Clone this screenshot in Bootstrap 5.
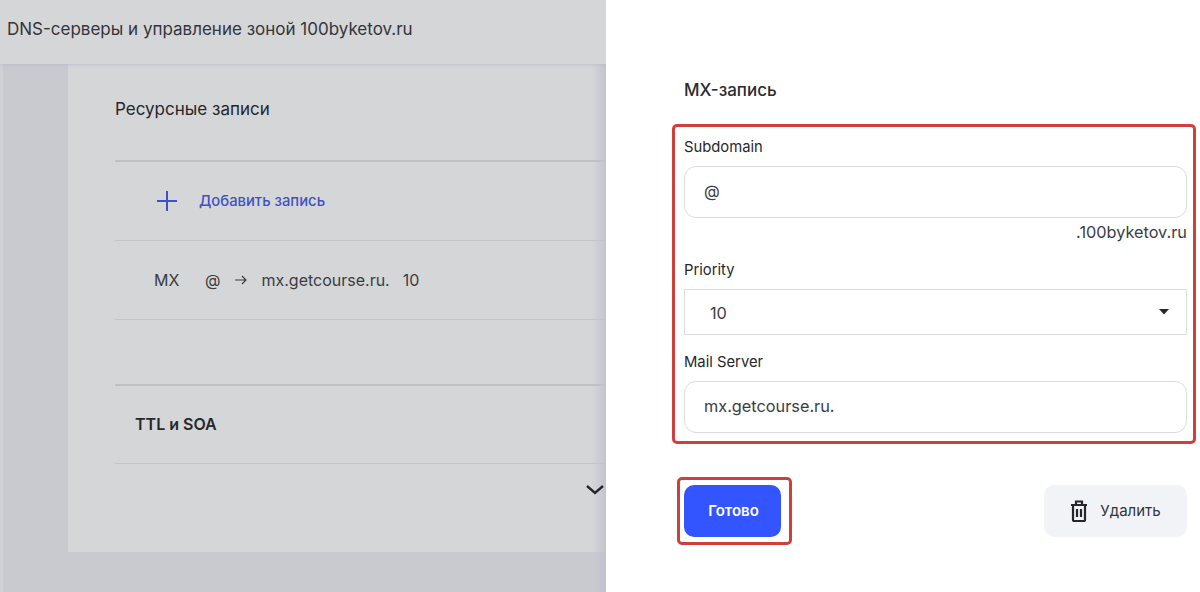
<!doctype html>
<html lang="ru">
<head>
<meta charset="utf-8">
<title>MX-запись</title>
<link href="https://cdn.jsdelivr.net/npm/bootstrap@5.3.0/dist/css/bootstrap.min.css" rel="stylesheet">
<style>
html,body{height:592px;overflow:hidden}
body{font-family:Inter,"Liberation Sans",sans-serif;color:#24262b;background:#fff}
.shell{height:592px}
.backdrop{width:606px;flex:none;background:#c9cad0;overflow:hidden;position:relative}
.backdrop::after{content:"";position:absolute;top:0;right:0;bottom:0;width:14px;background:linear-gradient(to right,rgba(190,193,208,0),rgba(190,193,208,.85));pointer-events:none}
.backdrop::before{content:"";position:absolute;top:0;left:0;bottom:0;width:3px;background:#d0d1d5}
.topline{height:64px;background:#d5d6d8;font-size:17px;padding:0 0 4px 7px;box-shadow:0 1px 3px rgba(165,170,195,.45);position:relative;z-index:1;color:#33353a;white-space:nowrap}
.sheet{margin-left:68px;width:600px;height:488px;background:#d5d6d8;padding-left:47px}
.sec-title{height:98px;font-size:17px;padding-top:34px;line-height:22px;color:#24262b;border-bottom:2px solid #bfc0c4}
.sec-add{height:79px;border-bottom:1px solid #c4c5c9;padding-left:42px;gap:22px;color:#3f51c4;font-size:14.8px;font-weight:500}
.sec-rec{height:79px;border-bottom:1px solid #c4c5c9;padding-left:39px;font-size:16px;color:#3a3c41}
.sec-gap{height:66px;border-bottom:2px solid #bfc0c4}
.sec-ttl{height:78px;border-bottom:1px solid #c4c5c9;padding:0 0 2px 20px;font-size:16px;font-weight:600;color:#26282c}
.chev{width:20px;height:12px;margin:20px 0 0 470px;display:block;position:relative;z-index:2}
.rec-type{width:51px}
.rec-arrow{margin:0 14px 0 15px}
.rec-prio{margin-left:13px}
.panel{flex:1;padding:0 13px 0 78px}
.panel-title{font-size:17px;font-weight:500;line-height:22px;padding-top:79px;margin-bottom:23px;color:#2a2c31}
.hl-box{border:3px solid #d0403a;border-radius:5px;margin:0 -9px 0 -12px;padding:10px 6px 8px 9px;height:320px}
.fld-label{font-size:14.8px;font-weight:400;line-height:20px;margin-bottom:0;color:#26282c;display:block}
.fld-text.form-control{height:52px;border:1px solid #dcdde0;border-radius:12px;padding:0 19px 2px;font-size:16.3px;color:#3b3d42;margin-top:9px;box-shadow:none}
.suffix{font-size:16.3px;line-height:20px;text-align:right;color:#3b3d42;margin-top:4px;margin-bottom:18px}
.fld-select.form-select{height:46px;border:1px solid #dcdde0;border-radius:0;padding:2px 25px 0;font-size:16.3px;color:#3b3d42;margin-top:9px;margin-bottom:17px;box-shadow:none;background-image:url("data:image/svg+xml,%3csvg xmlns='http://www.w3.org/2000/svg' viewBox='0 0 10 6'%3e%3cpath fill='%2324262b' d='M0 0h10L5 5.500z'/%3e%3c/svg%3e");background-size:10px 6px;background-position:right 17px center}
.actions{margin-top:33px}
.btn-ok-wrap{border:3px solid #d0403a;border-radius:5px;padding:5px 8px 5px 4px;margin-left:-7px}
.btn-ok.btn{width:97px;height:52px;background:#3355ff;border:0;border-radius:10px;color:#fff;font-size:15px;font-weight:600;padding:0 0 0 2px}
.btn-del.btn{width:143px;height:52px;background:#f2f3f7;border:0;border-radius:10px;color:#33353a;font-size:15px;font-weight:400;padding:0;gap:12px}
</style>
</head>
<body>
<div class="shell d-flex">
  <div class="backdrop">
    <div class="topline d-flex align-items-center">DNS-серверы и управление зоной 100byketov.ru</div>
    <div class="sheet">
      <div class="sec-title">Ресурсные записи</div>
      <div class="sec-add d-flex align-items-center">
        <svg width="20" height="20" viewBox="0 0 20 20" fill="none" stroke="#3f51c4" stroke-width="2" aria-hidden="true"><path d="M10 0v20M0 10h20"/></svg>
        <span>Добавить запись</span>
      </div>
      <div class="sec-rec d-flex align-items-center">
        <span class="rec-type">MX</span><span>@</span>
        <svg class="rec-arrow" width="12" height="10" viewBox="0 0 12 10" fill="none" stroke="#3a3c41" stroke-width="1.2" aria-hidden="true"><path d="M0 5h11M7 1l4 4-4 4"/></svg>
        <span>mx.getcourse.ru.</span><span class="rec-prio">10</span>
      </div>
      <div class="sec-gap"></div>
      <div class="sec-ttl d-flex align-items-center">TTL и SOA</div>
      <svg class="chev" viewBox="0 0 20 12" fill="none" stroke="#24262b" stroke-width="2.4" aria-hidden="true"><path d="M2 2l8 7 8-7"/></svg>
    </div>
  </div>
  <div class="panel">
    <div class="panel-title">MX-запись</div>
    <div class="hl-box">
      <label class="fld-label" for="f1">Subdomain</label>
      <input id="f1" class="form-control fld-text" value="@">
      <div class="suffix">.100byketov.ru</div>
      <label class="fld-label" for="f2">Priority</label>
      <select id="f2" class="form-select fld-select"><option>10</option></select>
      <label class="fld-label" for="f3">Mail Server</label>
      <input id="f3" class="form-control fld-text" value="mx.getcourse.ru.">
    </div>
    <div class="actions d-flex justify-content-between align-items-center">
      <div class="btn-ok-wrap"><button class="btn btn-ok d-block">Готово</button></div>
      <button class="btn btn-del d-flex align-items-center justify-content-center">
        <svg width="18" height="22" viewBox="0 0 18 22" fill="none" stroke="#24262b" stroke-width="2.2" aria-hidden="true"><path d="M1 5h16M3 5v15a1 1 0 0 0 1 1h10a1 1 0 0 0 1-1V5M6 5V1.500h6V5M7 9v8M11 9v8"/></svg>
        <span>Удалить</span>
      </button>
    </div>
  </div>
</div>
<script src="https://cdn.jsdelivr.net/npm/bootstrap@5.3.0/dist/js/bootstrap.bundle.min.js"></script>
</body>
</html>
